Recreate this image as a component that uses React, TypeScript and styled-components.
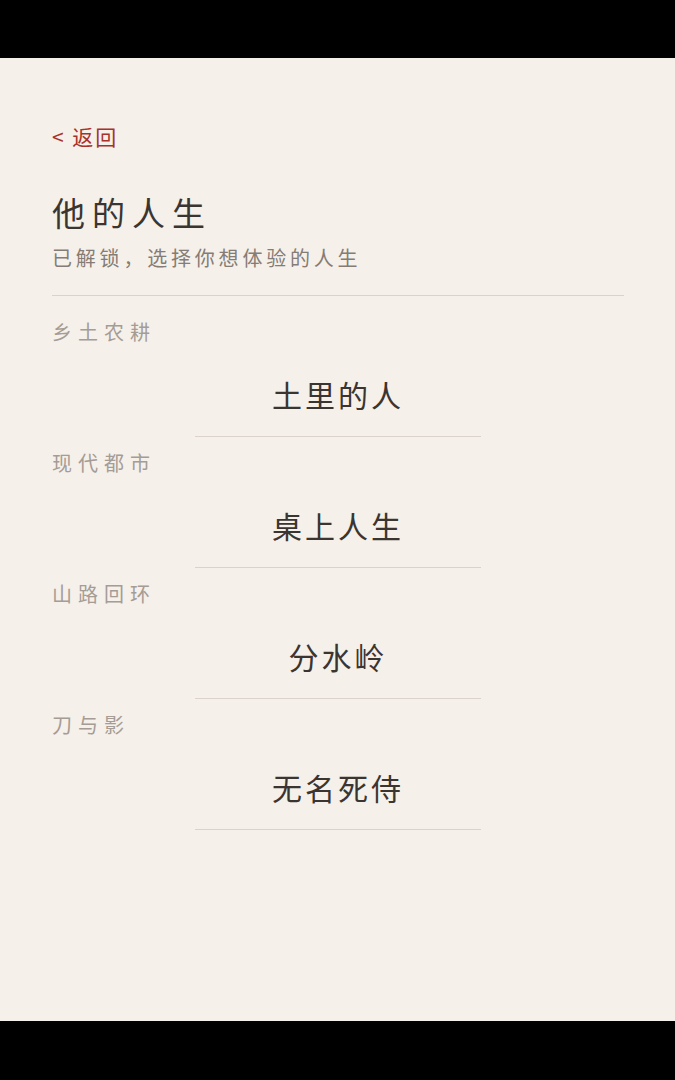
import * as React from "react";
import styled, { createGlobalStyle } from "styled-components";

const GlobalStyle = createGlobalStyle`
  html, body {
    margin: 0;
    padding: 0;
    background: #000;
  }
  body {
    font-family: "Noto Sans CJK SC", "Noto Sans", sans-serif;
  }
`;

interface Life {
  category: string;
  title: string;
}

const lives: Life[] = [
  { category: "乡土农耕", title: "土里的人" },
  { category: "现代都市", title: "桌上人生" },
  { category: "山路回环", title: "分水岭" },
  { category: "刀与影", title: "无名死侍" },
];

const App: React.FunctionComponent = () => {
  return (
    <Screen>
      <GlobalStyle />
      <SystemBar $height={58} />
      <Page>
        <BackLink href="#">&lt; 返回</BackLink>
        <Title>他的人生</Title>
        <Subtitle>已解锁，选择你想体验的人生</Subtitle>
        <Divider />
        <LifeList>
          {lives.map((life) => (
            <Section key={life.title}>
              <Category>{life.category}</Category>
              <LifeButton type="button">{life.title}</LifeButton>
            </Section>
          ))}
        </LifeList>
      </Page>
      <SystemBar $height={59} />
    </Screen>
  );
};

export default App;

const Screen = styled.div`
  display: flex;
  flex-direction: column;
  width: 675px;
  height: 1080px;
  background: #000;
`;

const SystemBar = styled.div<{ $height: number }>`
  flex: 0 0 ${(p) => p.$height}px;
  background: #000;
`;

const Page = styled.main`
  flex: 1;
  display: flex;
  flex-direction: column;
  padding: 64px 51px 0 52px;
  background: #f5f0ea;
  overflow: hidden;
`;

const BackLink = styled.a`
  align-self: flex-start;
  font-size: 21px;
  line-height: 28px;
  letter-spacing: 2px;
  color: #a8322b;
  text-decoration: none;
`;

const Title = styled.h1`
  margin: 40px 0 0;
  font-size: 33px;
  line-height: 44px;
  font-weight: 400;
  letter-spacing: 7px;
  color: #3a3531;
`;

const Subtitle = styled.p`
  margin: 10px 0 0;
  font-size: 20px;
  line-height: 28px;
  letter-spacing: 3.8px;
  color: #857c75;
`;

const Divider = styled.hr`
  margin: 23px 0 0;
  border: 0;
  height: 1px;
  background: #ddd2cb;
`;

const LifeList = styled.div`
  display: flex;
  flex-direction: column;
  padding-top: 10px;
`;

const Section = styled.section`
  display: flex;
  flex-direction: column;
  padding-top: 12px;
`;

const Category = styled.div`
  font-size: 20px;
  line-height: 28px;
  letter-spacing: 6px;
  color: #a59c95;
`;

const LifeButton = styled.button`
  align-self: center;
  width: 286px;
  margin-top: 28px;
  padding: 0 0 22px 0;
  border: 0;
  border-bottom: 1px solid #ddd2cb;
  background: transparent;
  font-family: inherit;
  font-size: 30px;
  line-height: 40px;
  letter-spacing: 3px;
  color: #3a3531;
  text-align: center;
  cursor: pointer;
`;
